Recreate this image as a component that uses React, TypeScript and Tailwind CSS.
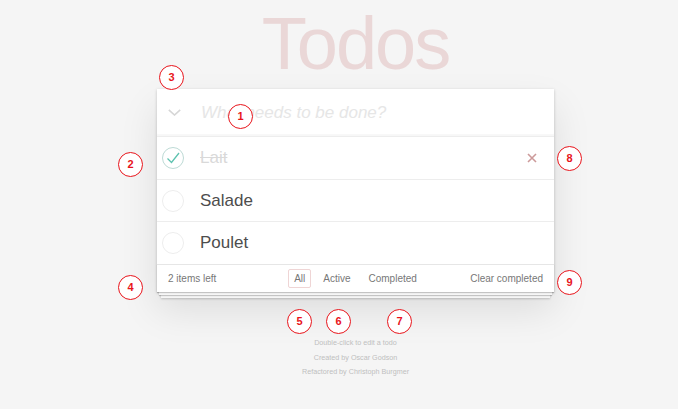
import React from "react";

type Todo = { title: string; done: boolean };

const todos: Todo[] = [
  { title: "Lait", done: true },
  { title: "Salade", done: false },
  { title: "Poulet", done: false },
];

const markers = [
  { n: 1, pos: "left-[228px] top-[104px]" },
  { n: 2, pos: "left-[118px] top-[152px]" },
  { n: 3, pos: "left-[159px] top-[65px]" },
  { n: 4, pos: "left-[118px] top-[275px]" },
  { n: 5, pos: "left-[287px] top-[309px]" },
  { n: 6, pos: "left-[326px] top-[309px]" },
  { n: 7, pos: "left-[387px] top-[309px]" },
  { n: 8, pos: "left-[557px] top-[146px]" },
  { n: 9, pos: "left-[557px] top-[270px]" },
];

const Toggle = ({ done }: { done: boolean }) => (
  <svg width="22" height="22" viewBox="0 0 22 22" className="shrink-0">
    <circle cx="11" cy="11" r="10.5" fill="none" stroke={done ? "#bddad5" : "#ededed"} strokeWidth="1" />
    {done && (
      <polyline
        points="5.5,11.5 9.5,15.5 17,6"
        fill="none"
        stroke="#5dc2af"
        strokeWidth="1.3"
      />
    )}
  </svg>
);

const TodoRow = ({ todo }: { todo: Todo }) => (
  <li className="flex h-[42.7px] items-center border-t border-[#ededed] pl-[5px]">
    <Toggle done={todo.done} />
    <span
      className={
        todo.done
          ? "ml-[16px] flex-1 text-[17px] text-[#d9d9d9] line-through"
          : "ml-[16px] flex-1 text-[17px] text-[#4d4d4d]"
      }
    >
      {todo.title}
    </span>
    {todo.done && (
      <svg width="10" height="10" viewBox="0 0 10 10" className="mr-[17px]">
        <path d="M1 1 L9 9 M9 1 L1 9" stroke="#cc9a9a" strokeWidth="1.6" />
      </svg>
    )}
  </li>
);

export default function App() {
  return (
    <div className="relative h-[409px] w-[678px] overflow-hidden bg-[#f5f5f5] font-['Liberation_Sans',Arial,sans-serif]">
      <section className="ml-[157px] flex w-[397px] flex-col">
        <h1 className="h-[89px] pt-[7px] text-center text-[74px] leading-[74px] tracking-[-2px] text-[#ead7d7]">
          Todos
        </h1>

        <div className="bg-white shadow-[0_1px_3px_rgba(0,0,0,0.2),0_18px_36px_rgba(0,0,0,0.1)]">
          <header className="flex h-[47px] items-center pl-[11px] shadow-[inset_0_-2px_1px_rgba(0,0,0,0.03)]">
            <svg width="13" height="7" viewBox="0 0 13 7" className="shrink-0">
              <polyline points="0.8,0.8 6.5,6 12.2,0.8" fill="none" stroke="#d6d6d6" strokeWidth="1.6" />
            </svg>
            <span className="ml-[20px] text-[17px] italic text-[#e6e6e6]">What needs to be done?</span>
          </header>

          <ul>
            {todos.map((t) => (
              <TodoRow key={t.title} todo={t} />
            ))}
          </ul>

          <footer className="grid h-[28px] grid-cols-[1fr_auto_1fr] items-center border-t border-[#e6e6e6] px-[11px] text-[10px] text-[#777] shadow-[0_1px_1px_rgba(0,0,0,0.2),0_5px_0_-2px_#f6f6f6,0_6px_1px_-2px_rgba(0,0,0,0.2),0_10px_0_-4px_#f6f6f6,0_11px_2px_-4px_rgba(0,0,0,0.2)]">
            <span>2 items left</span>
            <ul className="flex items-center">
              <li className="mx-[3px] rounded-[2px] border border-[rgba(175,47,47,0.2)] px-[5px] py-[1px]">All</li>
              <li className="mx-[3px] border border-transparent px-[5px] py-[1px]">Active</li>
              <li className="mx-[3px] border border-transparent px-[5px] py-[1px]">Completed</li>
            </ul>
            <span className="text-right">Clear completed</span>
          </footer>
        </div>

        <div className="mt-[44px] text-center text-[7.2px] leading-[14.5px] text-[#bfbfbf]">
          <p>Double-click to edit a todo</p>
          <p>Created by Oscar Godson</p>
          <p>Refactored by Christoph Burgmer</p>
        </div>
      </section>

      {markers.map((m) => (
        <div
          key={m.n}
          className={`absolute ${m.pos} flex h-[25px] w-[25px] items-center justify-center rounded-full border-[1.5px] border-[#e8141b] bg-white text-[11px] font-bold text-[#e8141b]`}
        >
          {m.n}
        </div>
      ))}
    </div>
  );
}
